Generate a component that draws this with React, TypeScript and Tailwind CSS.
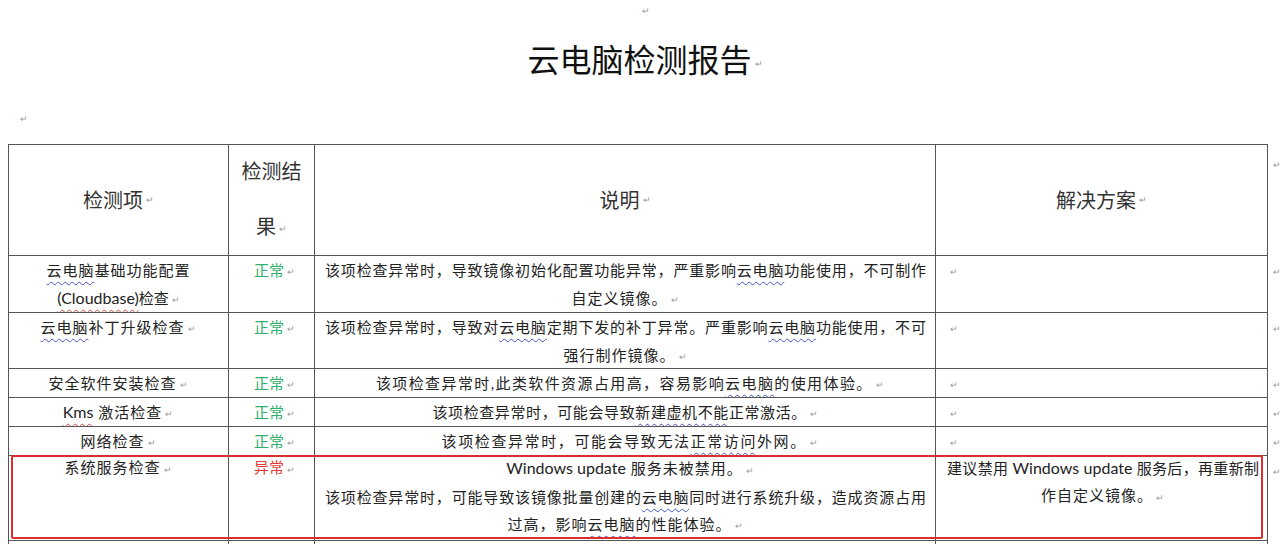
import React from 'react'

const mark = <span className="ml-[3px] align-middle text-[9px] text-[#9a9a9a]">↵</span>

// Word's wavy spell-check line
function W({ children, red }: { children: React.ReactNode; red?: boolean }) {
  return (
    <span
      className={
        'underline decoration-wavy decoration-1 underline-offset-[5px] ' +
        (red ? 'decoration-[#d94a4a]' : 'decoration-[#4a55c8]')
      }
    >
      {children}
    </span>
  )
}

const L = ({ children }: { children: React.ReactNode }) => (
  <span className="text-[16px] tracking-normal">{children}</span>
)

const c1 = 'w-[221px] border-l border-r border-b border-[#555] shrink-0 overflow-hidden'
const c2 = 'w-[86px] border-r border-b border-[#555] shrink-0 overflow-hidden'
const c3 = 'w-[621px] border-r border-b border-[#555] shrink-0 overflow-hidden'
const c4 = 'w-[332px] border-r border-b border-[#555] shrink-0 overflow-hidden'

const ok = (
  <div className="pl-[6px] text-center text-[#2fb06c]">
    正常{mark}
  </div>
)

function Row({
  h,
  a,
  b,
  c,
  d,
  lead = 'leading-[28px]',
  shift = '',
  end = true,
}: {
  h: string
  a: React.ReactNode
  b: React.ReactNode
  c: React.ReactNode
  d?: React.ReactNode
  lead?: string
  shift?: string
  end?: boolean
}) {
  return (
    <div className={'flex items-start pl-2 ' + lead}>
      <div className={c1 + ' ' + h + ' text-center'}>
        <div className={shift}>{a}</div>
      </div>
      <div className={c2 + ' ' + h}>
        <div className={shift}>{b}</div>
      </div>
      <div className={c3 + ' ' + h + ' pl-[10px] pr-[9px]'}>
        <div className={shift}>{c}</div>
      </div>
      <div className={c4 + ' ' + h + ' pl-[11px] pr-[8px]'}>
        <div className={shift}>{d === undefined ? mark : d}</div>
      </div>
      <div className="h-0 overflow-visible pl-[2px]">{end && mark}</div>
    </div>
  )
}

const just = 'text-justify [text-align-last:justify]'

export default function App() {
  return (
    <div
      lang="zh-CN"
      className="w-[1280px] h-[544px] overflow-hidden bg-white text-[#222] font-['Lato','Noto_Sans_CJK_SC',sans-serif]"
    >
      <div className="h-[22px] pl-[8px] text-center leading-[18px]">{mark}</div>
      <div className="h-[76px] pl-[10px] text-center text-[32px] leading-[76px] text-[#111]">
        云电脑检测报告{mark}
      </div>
      <div className="h-[46px] pl-[17px] pt-[11px] leading-[16px]">{mark}</div>

      {/* header */}
      <div className="flex items-start pl-2 text-[20px] text-[#333]">
        <div className={c1 + ' border-t h-[112px] flex items-center justify-center'}>
          检测项{mark}
        </div>
        <div className={c2 + ' border-t h-[112px] flex flex-col justify-center text-center leading-[55px]'}>
          <div>检测结</div>
          <div>果{mark}</div>
        </div>
        <div className={c3 + ' border-t h-[112px] flex items-center justify-center'}>
          说明{mark}
        </div>
        <div className={c4 + ' border-t h-[112px] flex items-center justify-center'}>
          解决方案{mark}
        </div>
        <div className="h-0 overflow-visible pl-[2px] pt-[10px] leading-[16px]">{mark}</div>
      </div>

      <div className="text-[15px]">
        <Row
          h="h-[57px]"
          a={
            <>
              <div className="tracking-[1px]">
                <W>云电脑</W>基础功能配置
              </div>
              <div>
                <W red>
                  <L>(Cloudbase)</L>
                </W>
                检查{mark}
              </div>
            </>
          }
          b={ok}
          c={
            <>
              <div className={just}>
                该项检查异常时，导致镜像初始化配置功能异常，严重影响<W>云电脑</W>功能使用，不可制作
              </div>
              <div className="text-center tracking-[1px]">自定义镜像。{mark}</div>
            </>
          }
        />
        <Row
          h="h-[56px]"
          a={
            <div className="tracking-[1px]">
              <W>云电脑</W>补丁升级检查{mark}
            </div>
          }
          b={ok}
          c={
            <>
              <div className={just}>
                该项检查异常时，导致对<W>云电脑</W>定期下发的补丁异常。严重影响<W>云电脑</W>功能使用，不可
              </div>
              <div className="text-center tracking-[1px]">强行制作镜像。{mark}</div>
            </>
          }
        />
        <Row
          h="h-[29px]"
          a={<div className="tracking-[1px]">安全软件安装检查{mark}</div>}
          b={ok}
          c={
            <div className="pl-[10px] text-center tracking-[1.4px]">
              该项检查异常时,此类软件资源占用高，容易影响<W>云电脑</W>的使用体验。{mark}
            </div>
          }
        />
        <Row
          h="h-[29px]"
          a={
            <div className="tracking-[1px]">
              <W red>
                <L>Kms</L>
              </W>{' '}
              激活检查{mark}
            </div>
          }
          b={ok}
          c={
            <div className="text-center tracking-[0.6px]">
              该项检查异常时，可能会导致<W>新建虚机不能</W>正常激活。{mark}
            </div>
          }
        />
        <Row
          h="h-[29px]"
          a={<div className="tracking-[1px]">网络检查{mark}</div>}
          b={ok}
          c={
            <div className="pl-[10px] text-center tracking-[1.6px]">
              该项检查异常时，可能会导致无法<W>正常访问</W>外网。{mark}
            </div>
          }
        />

        {/* flagged row */}
        <div className="relative">
          <Row
            h="h-[85px]"
            lead="leading-[27px]"
            shift="-mt-[2px]"
            a={<div className="tracking-[1px]">系统服务检查{mark}</div>}
            b={
              <div className="pl-[6px] text-center text-[#e23b3b]">
                异常{mark}
              </div>
            }
            c={
              <>
                <div className="pl-[10px] text-center tracking-[1px]">
                  <L>Windows update</L> 服务未被禁用。{mark}
                </div>
                <div className={just}>
                  该项检查异常时，可能导致该镜像批量创建的<W>云电脑</W>同时进行系统升级，造成资源占用
                </div>
                <div className="text-center tracking-[1px]">
                  过高，影响<W>云电脑</W>的性能体验。{mark}
                </div>
              </>
            }
            d={
              <>
                <div className={just}>
                  建议禁用 <L>Windows update</L> 服务后，再重新制
                </div>
                <div className="text-center tracking-[1px]">作自定义镜像。{mark}</div>
              </>
            }
          />
          <div className="absolute left-[11px] top-[-1px] h-[84px] w-[1252px] rounded-[2px] border-2 border-[#d8302f]" />
        </div>

        <Row h="h-[28px]" a={null} b={null} c={null} d={null} end={false} />
      </div>
    </div>
  )
}
